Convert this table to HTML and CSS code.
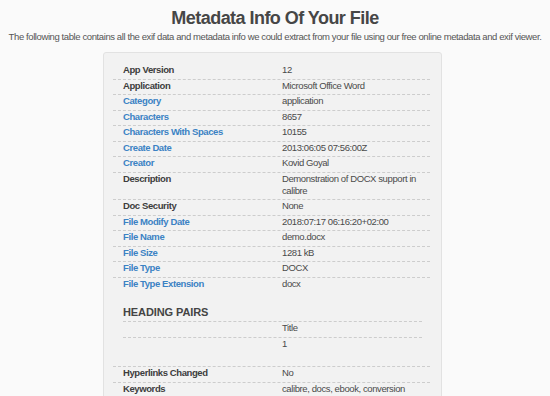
FILE: index.html
```html
<!DOCTYPE html>
<html>
<head>
  <meta charset="UTF-8">
  <title>Metadata Info Of Your File</title>
  <link rel="stylesheet" href="styles.css">
</head>
<body>
<h1>Metadata Info Of Your File</h1>
<p class="intro">The following table contains all the exif data and metadata info we could extract from your <a href="#">file</a> using our free online metadata and exif viewer.</p>

<div class="meta-card">
  <div class="meta-table first">
    <div class="row"><span class="key">App Version</span><span class="val">12</span></div>
    <div class="row"><span class="key">Application</span><span class="val">Microsoft Office Word</span></div>
    <div class="row"><a class="key link" href="#">Category</a><span class="val">application</span></div>
    <div class="row"><a class="key link" href="#">Characters</a><span class="val">8657</span></div>
    <div class="row"><a class="key link" href="#">Characters With Spaces</a><span class="val">10155</span></div>
    <div class="row"><a class="key link" href="#">Create Date</a><span class="val">2013:06:05 07:56:00Z</span></div>
    <div class="row"><a class="key link" href="#">Creator</a><span class="val">Kovid Goyal</span></div>
    <div class="row"><span class="key">Description</span><span class="val">Demonstration of DOCX support in calibre</span></div>
    <div class="row"><span class="key">Doc Security</span><span class="val">None</span></div>
    <div class="row"><a class="key link" href="#">File Modify Date</a><span class="val">2018:07:17 06:16:20+02:00</span></div>
    <div class="row"><a class="key link" href="#">File Name</a><span class="val">demo.docx</span></div>
    <div class="row"><a class="key link" href="#">File Size</a><span class="val">1281 kB</span></div>
    <div class="row"><a class="key link" href="#">File Type</a><span class="val">DOCX</span></div>
    <div class="row"><a class="key link" href="#">File Type Extension</a><span class="val">docx</span></div>
  </div>

  <h3>HEADING PAIRS</h3>
  <div class="meta-table nested">
    <div class="row"><span class="key"></span><span class="val">Title</span></div>
    <div class="row"><span class="key"></span><span class="val">1</span></div>
  </div>

  <div class="meta-table">
    <div class="row"><span class="key">Hyperlinks Changed</span><span class="val">No</span></div>
    <div class="row"><span class="key">Keywords</span><span class="val">calibre, docs, ebook, conversion</span></div>
  </div>
</div>
</body>
</html>
```
FILE: styles.css
```css
body {
	margin: 0;
	padding: 7.6px 8px 0;
	background-color: #fafafa;
	font-family: "Liberation Sans", Arial, sans-serif;
	color: #555;
}
h1 {
	margin: 0;
	font-size: 18px;
	line-height: 20px;
	letter-spacing: -0.54px;
	text-align: center;
	color: #464646;
}
.intro {
	margin: 3.9px 0 0;
	font-size: 9.5px;
	line-height: 12px;
	letter-spacing: -0.4px;
	text-align: center;
	color: #555;
}
.intro a { color: #555; text-decoration: none; }

.meta-card {
	width: 317px;
	margin: 8.5px 0 0 95px;
	padding: 10px 11px 40px 9px;
	background-color: #f2f2f2;
	border: 1px solid #e2e2e2;
	border-radius: 3px;
	font-size: 9.5px;
	letter-spacing: -0.4px;
}
.meta-table .row {
	display: grid;
	grid-template-columns: 169px 1fr;
	border-top: 1px dashed #cdcdcd;
	line-height: 11.5px;
	padding-bottom: 3.08px;
}
.meta-table.first .row:first-child { border-top-color: transparent; }
.meta-table .key {
	padding-left: 10px;
	font-weight: bold;
	color: #3d3d3d;
	text-decoration: none;
}
.meta-table .key.link { color: #3b82c4; }
.meta-table .val {
	padding-right: 8px;
	color: #4a4a4a;
}
.meta-table.nested {
	margin: 0 8px 13.7px 10px;
}
.meta-table.nested .row { grid-template-columns: 159px 1fr; }
.meta-table.nested .key { padding-left: 0; }

h3 {
	margin: 13.5px 0 2.4px 10px;
	font-size: 11px;
	line-height: 13px;
	letter-spacing: -0.1px;
	color: #444;
}
```
